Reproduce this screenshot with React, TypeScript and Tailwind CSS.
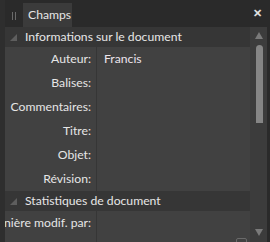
import React from "react";

const rows = [
  { label: "Auteur:", value: "Francis" },
  { label: "Balises:", value: "" },
  { label: "Commentaires:", value: "" },
  { label: "Titre:", value: "" },
  { label: "Objet:", value: "" },
  { label: "Révision:", value: "" },
];

function Header({ text }: { text: string }) {
  return (
    <div className="h-[20px] bg-[#363636] flex items-center text-[#e6e6e6]">
      <svg width="7" height="7" viewBox="0 0 7 7" className="ml-[5px] mr-[8px]">
        <polygon points="7,0 7,7 0,7" fill="#5e5e5e" />
      </svg>
      <span>{text}</span>
    </div>
  );
}

function Row({ label, value }: { label: string; value: string }) {
  return (
    <div className="h-[24px] flex items-center">
      <div className="w-[91px] h-full flex items-center justify-end pr-[5px] text-[#e6e6e6] whitespace-nowrap overflow-hidden">
        {label}
      </div>
      <div className="w-[1px] h-full bg-[#363636]" />
      <div className="flex-1 pl-[7px] text-[#ece4ec]">{value}</div>
    </div>
  );
}

export default function App() {
  return (
    <div
      className="w-[270px] h-[242px] bg-[#2a2a2a] flex flex-col relative overflow-hidden text-[12.2px] leading-none"
      style={{ fontFamily: 'Lato, "Open Sans", sans-serif' }}
    >
      <div className="h-[27px] flex items-end shrink-0">
        <div className="w-[5px] h-full bg-[#2e2e2e]" />
        <div className="flex gap-[2px] ml-[7px] mb-[7px] h-[8px]">
          <div className="w-[1px] h-full bg-[#6a6a6a]" />
          <div className="w-[1px] h-full bg-[#6a6a6a]" />
        </div>
        <div className="ml-[7px] h-[24px] w-[49px] bg-[#3b3b3b] flex items-center pl-[5px] text-[#e6e6e6]">
          Champs
        </div>
        <div className="flex-1" />
        <div className="mb-[9px] mr-[8px] text-[#e0e0e0] text-[11px] font-bold leading-none">✕</div>
      </div>
      <div className="flex-1 flex min-h-0">
        <div className="w-[5px] bg-[#2e2e2e]" />
        <div className="w-[245px] bg-[#414141] flex flex-col">
          <Header text="Informations sur le document" />
          {rows.map((r) => (
            <Row key={r.label} label={r.label} value={r.value} />
          ))}
          <Header text="Statistiques de document" />
          <div className="h-[24px] flex items-center">
            <div className="w-[91px] h-full flex items-center justify-end pr-[5px] text-[#e6e6e6] whitespace-nowrap overflow-hidden">
              Dernière modif. par:
            </div>
            <div className="w-[1px] h-full bg-[#363636]" />
            <div className="flex-1" />
          </div>
          <div className="flex-1 flex">
            <div className="w-[91px]" />
            <div className="w-[1px] bg-[#363636]" />
          </div>
        </div>
        <div className="w-[17px] bg-[#3c3c3c] flex flex-col items-center pt-[5px] pb-[6px]">
          <svg width="8" height="7" viewBox="0 0 8 7" className="ml-[1px]">
            <polygon points="4,0 8,7 0,7" fill="#7a7a7a" />
          </svg>
          <div className="w-[7px] h-[78px] mt-[6px] ml-[1px] rounded-t-full rounded-b-[3px] bg-[#858585]" />
          <div className="flex-1" />
          <svg width="8" height="7" viewBox="0 0 8 7" className="ml-[1px]">
            <polygon points="0,0 8,0 4,7" fill="#7a7a7a" />
          </svg>
        </div>
        <div className="w-[3px] bg-[#2a2a2a]" />
      </div>
      <div className="absolute left-[236px] top-[238px] w-[11px] h-[6px] rounded-[2px] border border-[#6a6a6a]" />
    </div>
  );
}
